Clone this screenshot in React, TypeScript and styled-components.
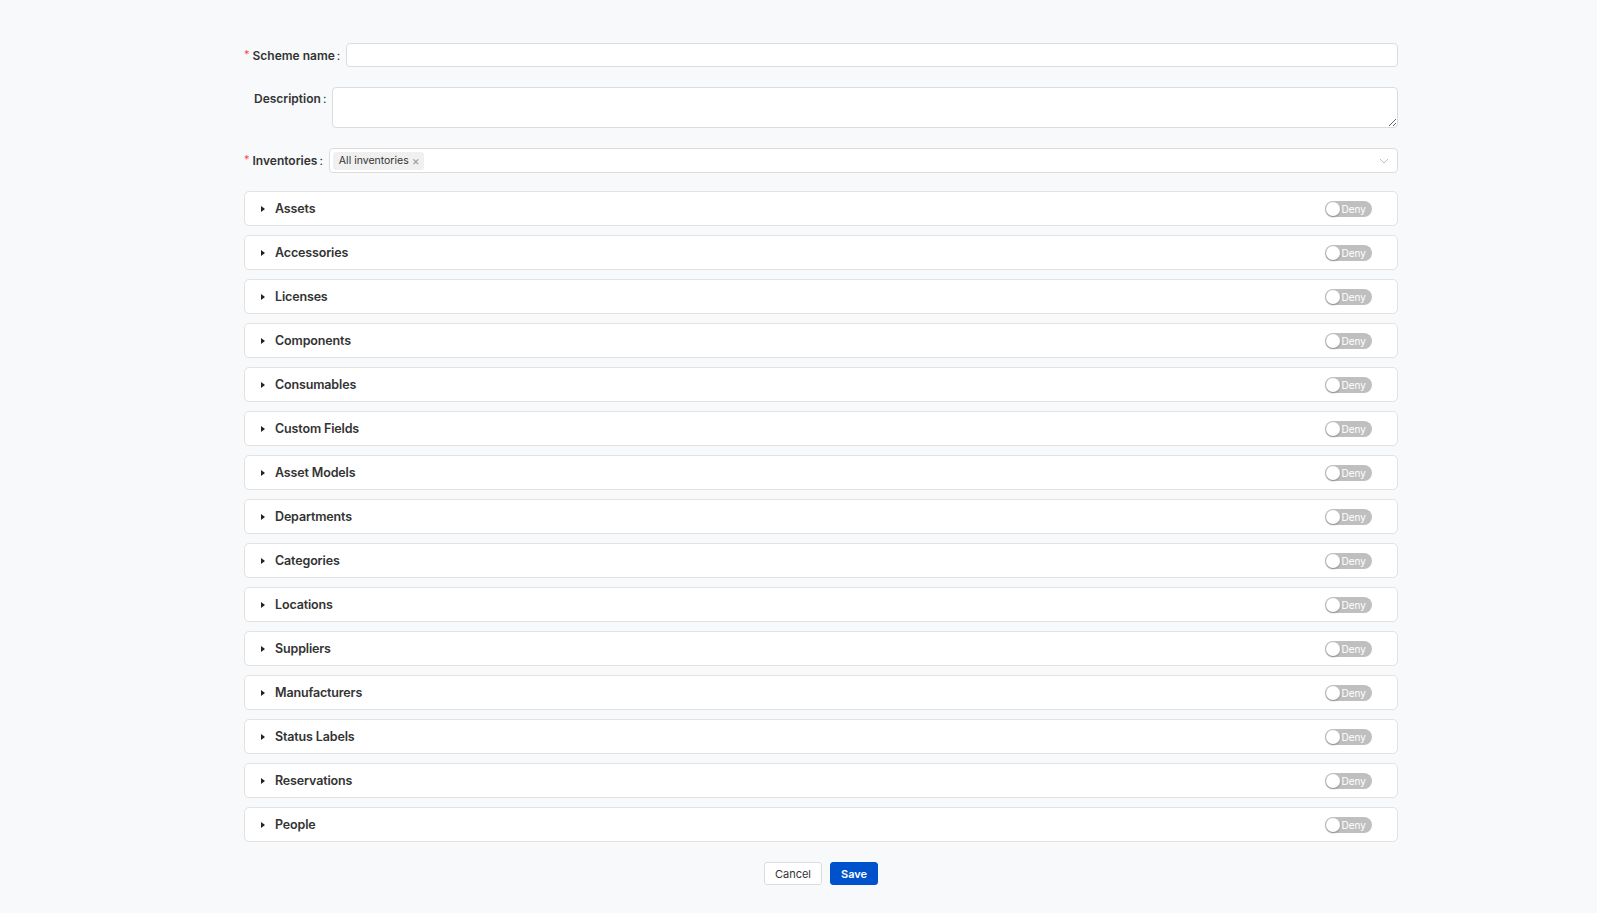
import styled, { createGlobalStyle } from 'styled-components'

const sections = [
  'Assets',
  'Accessories',
  'Licenses',
  'Components',
  'Consumables',
  'Custom Fields',
  'Asset Models',
  'Departments',
  'Categories',
  'Locations',
  'Suppliers',
  'Manufacturers',
  'Status Labels',
  'Reservations',
  'People',
]

export default function App() {
  return (
    <>
      <GlobalStyle />
      <Page>
        <Form>
          <FormItem>
            <Label $required>Scheme name</Label>
            <Input />
          </FormItem>

          <FormItem $top>
            <Label>Description</Label>
            <TextArea />
          </FormItem>

          <FormItem $last>
            <Label $required>Inventories</Label>
            <Select>
              <Tag>
                All inventories
                <TagClose>×</TagClose>
              </Tag>
              <Chevron width="10" height="10" viewBox="0 0 10 10">
                <path d="M1 3l4 4 4-4" fill="none" stroke="#bfbfbf" strokeWidth="1" />
              </Chevron>
            </Select>
          </FormItem>

          <PanelList>
            {sections.map((name) => (
              <Panel key={name}>
                <Caret />
                <PanelTitle>{name}</PanelTitle>
                <Switch>
                  <Knob />
                  <SwitchText>Deny</SwitchText>
                </Switch>
              </Panel>
            ))}
          </PanelList>

          <Footer>
            <Button>Cancel</Button>
            <Button $primary>Save</Button>
          </Footer>
        </Form>
      </Page>
    </>
  )
}

// styles
const GlobalStyle = createGlobalStyle`
  * { box-sizing: border-box; }
  body {
    margin: 0;
    background: #f8f9fb;
    font-family: Inter, "Liberation Sans", Arial, sans-serif;
    color: rgba(0, 0, 0, 0.85);
  }
`

const Page = styled.div`
  min-height: 100vh;
  padding: 43px 199px 20px 244px;
`

const Form = styled.form`
  display: flex;
  flex-direction: column;
`

const FormItem = styled.div<{ $top?: boolean; $last?: boolean }>`
  display: flex;
  align-items: ${(p) => (p.$top ? 'flex-start' : 'center')};
  margin-bottom: ${(p) => (p.$last ? '18px' : '20px')};
`

const Label = styled.label<{ $required?: boolean }>`
  display: flex;
  align-items: center;
  height: 23px;
  font-size: 12px;
  font-weight: 600;
  color: #333;
  white-space: nowrap;
  padding-left: ${(p) => (p.$required ? '0' : '10px')};

  &::before {
    content: ${(p) => (p.$required ? "'*'" : 'none')};
    color: #ff4d4f;
    font-size: 11px;
    font-weight: 400;
    margin-right: 3px;
    margin-top: -3px;
  }

  &::after {
    content: ':';
    font-weight: 400;
    margin: 0 6px 0 2px;
  }
`

const Input = styled.input`
  flex: 1;
  height: 24px;
  border: 1px solid #dcdcdc;
  border-radius: 4px;
  background: #fff;
  outline: none;
`

const TextArea = styled.textarea`
  flex: 1;
  height: 41px;
  border: 1px solid #dcdcdc;
  border-radius: 4px;
  background: #fff;
  outline: none;
  resize: vertical;
  font-family: inherit;
`

const Select = styled.div`
  flex: 1;
  display: flex;
  align-items: center;
  height: 25px;
  padding: 0 8px 0 3px;
  border: 1px solid #dcdcdc;
  border-radius: 4px;
  background: #fff;
`

const Tag = styled.span`
  display: inline-flex;
  align-items: center;
  height: 18px;
  padding: 0 4px 0 6px;
  background: #f0f0f0;
  border-radius: 3px;
  font-size: 10.5px;
  color: #333;
`

const TagClose = styled.span`
  margin-left: 3px;
  font-size: 12px;
  line-height: 1;
  color: #999;
`

const Chevron = styled.svg`
  margin-left: auto;
`

const PanelList = styled.div`
  display: flex;
  flex-direction: column;
  gap: 9px;
`

const Panel = styled.div`
  display: flex;
  align-items: center;
  height: 35px;
  padding: 0 25px 0 16px;
  background: #fff;
  border: 1px solid #e2e2e2;
  border-radius: 5px;
`

const Caret = styled.span`
  width: 0;
  height: 0;
  border-top: 3px solid transparent;
  border-bottom: 3px solid transparent;
  border-left: 4px solid #222;
  margin-right: 10px;
`

const PanelTitle = styled.span`
  flex: 1;
  font-size: 12.5px;
  font-weight: 600;
  letter-spacing: -0.15px;
  color: #333;
`

const Switch = styled.span`
  position: relative;
  display: inline-flex;
  align-items: center;
  justify-content: flex-end;
  width: 47px;
  height: 16px;
  padding-right: 6px;
  border-radius: 8px;
  background: #bfbfbf;
`

const Knob = styled.span`
  position: absolute;
  left: 1px;
  top: 1px;
  width: 14px;
  height: 14px;
  border-radius: 50%;
  background: #fff;
  box-shadow: 0 1px 2px rgba(0, 0, 0, 0.3);
`

const SwitchText = styled.span`
  font-size: 10px;
  font-weight: 400;
  color: #fff;
`

const Footer = styled.div`
  display: flex;
  justify-content: center;
  gap: 8px;
  margin-top: 20px;
`

const Button = styled.button<{ $primary?: boolean }>`
  height: 23px;
  padding: 0 10px;
  border-radius: 3px;
  font-family: inherit;
  font-size: 11px;
  font-weight: ${(p) => (p.$primary ? 600 : 400)};
  color: ${(p) => (p.$primary ? '#fff' : '#333')};
  background: ${(p) => (p.$primary ? '#0052cc' : '#fff')};
  border: 1px solid ${(p) => (p.$primary ? '#0052cc' : '#dcdcdc')};
  cursor: pointer;
`
